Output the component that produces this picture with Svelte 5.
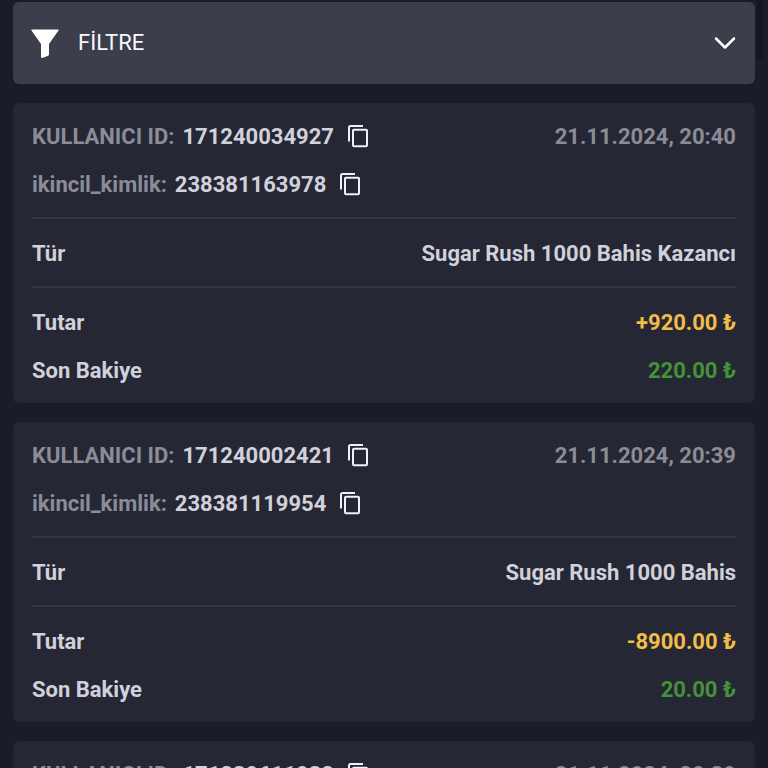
<script>
  let filterOpen = $state(false);

  const records = [
    {
      userId: "171240034927",
      secondaryId: "238381163978",
      date: "21.11.2024, 20:40",
      type: "Sugar Rush 1000 Bahis Kazancı",
      amount: "+920.00 ₺",
      balance: "220.00 ₺"
    },
    {
      userId: "171240002421",
      secondaryId: "238381119954",
      date: "21.11.2024, 20:39",
      type: "Sugar Rush 1000 Bahis",
      amount: "-8900.00 ₺",
      balance: "20.00 ₺"
    },
    {
      userId: "171239611938",
      secondaryId: "238380611938",
      date: "21.11.2024, 20:39",
      type: "Sugar Rush 1000 Bahis",
      amount: "-8900.00 ₺",
      balance: "8920.00 ₺"
    }
  ];

  const copy = (text) => navigator.clipboard?.writeText(text);
</script>

{#snippet identifier(label, value)}
  <div class="identifier">
    <span class="muted">{label}:</span>
    <span>{value}</span>
    <button class="copy" aria-label="Kopyala" onclick={() => copy(value)}>
      <svg viewBox="0 0 24 24" aria-hidden="true">
        <path d="M2 16.500V2.500A1.500 1.500 0 0 1 3.500 1H16" />
        <rect x="6" y="4.700" width="14" height="16.500" rx="1" />
      </svg>
    </button>
  </div>
{/snippet}

<main>
  <button
    class="filter"
    aria-expanded={filterOpen}
    onclick={() => (filterOpen = !filterOpen)}
  >
    <svg class="funnel" viewBox="0 0 28 30" aria-hidden="true">
      <path d="M0.800 1.500H27.200Q28.200 1.500 27.500 2.600L18 16V26.500Q18 27.500 17.200 27.800L11.200 30Q10 30 10 29.300V16L0.500 2.600Q-0.200 1.500 0.800 1.500Z" />
    </svg>
    <span>FİLTRE</span>
    <svg class="chevron" class:open={filterOpen} viewBox="0 0 22 14" aria-hidden="true">
      <path d="M2 2.500L11 11.500L20 2.500" />
    </svg>
  </button>

  {#each records as record}
    <article class="card">
      <section class="ids">
        <div class="row">
          {@render identifier("KULLANICI ID", record.userId)}
          <time class="muted">{record.date}</time>
        </div>
        <div class="row">
          {@render identifier("ikincil_kimlik", record.secondaryId)}
        </div>
      </section>
      <section>
        <div class="row">
          <span>Tür</span>
          <span>{record.type}</span>
        </div>
      </section>
      <section>
        <div class="row">
          <span>Tutar</span>
          <span class="amount">{record.amount}</span>
        </div>
        <div class="row">
          <span>Son Bakiye</span>
          <span class="balance">{record.balance}</span>
        </div>
      </section>
    </article>
  {/each}
</main>
<div class="scroll-thumb" aria-hidden="true"></div>

<style>
  :global(body) {
    margin: 0;
    background: #1a1c2a;
  }

  main {
    box-sizing: border-box;
    height: 100vh;
    overflow-y: auto;
    scrollbar-width: none;
    padding: 2px 13px;
    font-family: Roboto, "Noto Sans", sans-serif;
    font-size: 22px;
    font-weight: 700;
    line-height: 28px;
    color: #d0d1db;
  }

  button {
    border: 0;
    color: inherit;
    font: inherit;
    cursor: pointer;
  }

  svg {
    display: block;
    flex-shrink: 0;
  }

  .filter {
    display: flex;
    align-items: center;
    gap: 19px;
    width: 100%;
    height: 82px;
    padding: 0 19px 0 18px;
    border-radius: 6px;
    background: #3c3e4b;
    color: #f7f8fc;
    font-weight: 400;
  }

  .funnel {
    width: 28px;
    height: 30px;
    fill: #fff;
  }

  .chevron {
    width: 22px;
    height: 14px;
    margin-left: auto;
    fill: none;
    stroke: #fff;
    stroke-width: 2.5;
    stroke-linecap: round;
    stroke-linejoin: round;
  }

  .chevron.open {
    transform: rotate(180deg);
  }

  .card {
    margin-top: 19px;
    padding: 0 19px;
    border-radius: 6px;
    background: #252734;
  }

  section {
    display: flex;
    flex-direction: column;
    gap: 20px;
    padding: 21px 0 18px;
    border-top: 2px solid #343643;
  }

  .ids {
    padding-top: 20px;
    border-top: 0;
  }

  .row {
    display: flex;
    justify-content: space-between;
  }

  .identifier {
    display: flex;
    align-items: center;
    gap: 8px;
  }

  .muted {
    color: #8a8c98;
  }

  .copy {
    margin-left: 5px;
    padding: 0;
    background: none;
  }

  .copy svg {
    width: 24px;
    height: 24px;
    fill: none;
    stroke: #eff0f8;
    stroke-width: 2;
  }

  .amount {
    color: #f2bc48;
  }

  .balance {
    color: #439338;
  }

  .scroll-thumb {
    position: fixed;
    top: 0;
    right: 5px;
    width: 6px;
    height: 60px;
    background: #141622;
  }
</style>
